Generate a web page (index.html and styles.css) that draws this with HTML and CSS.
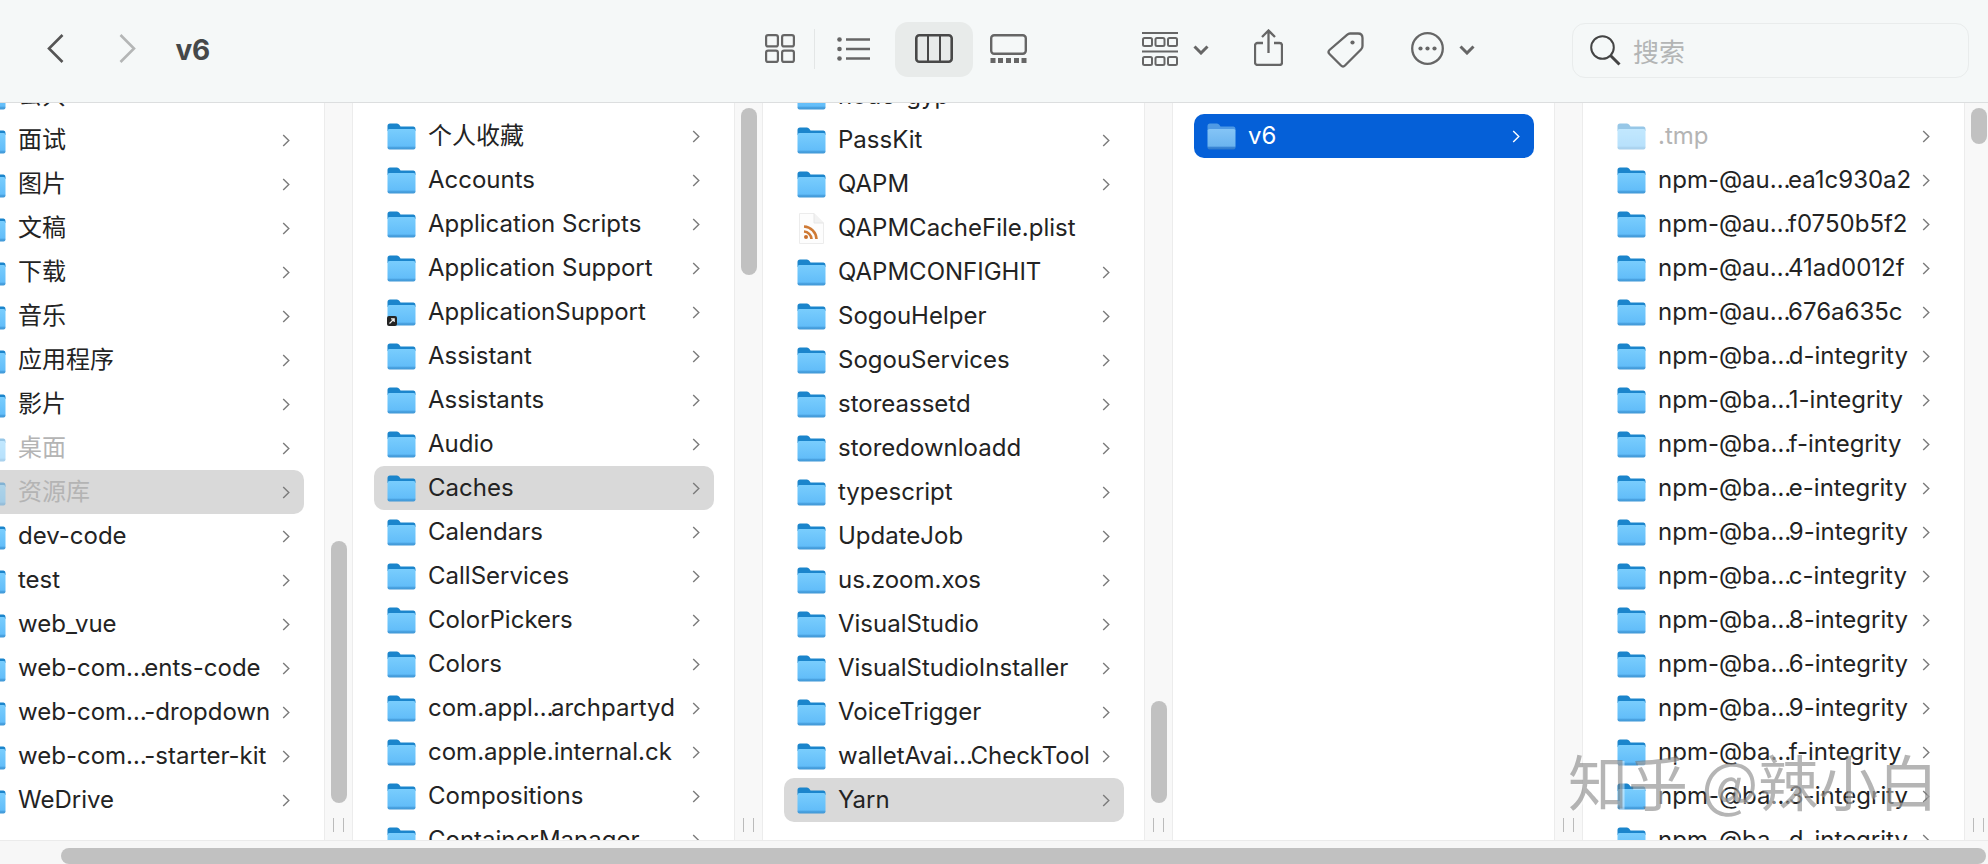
FILE: index.html
```html
<!DOCTYPE html>
<html lang="zh">
<head>
<meta charset="utf-8">
<title>v6</title>
<link rel="stylesheet" href="styles.css">
</head>
<body>
<svg class="defs" width="0" height="0" aria-hidden="true">
  <defs>
    <linearGradient id="fb" x1="0" y1="0" x2="0" y2="1"><stop offset="0" stop-color="#79cdfd"/><stop offset=".85" stop-color="#62bdf9"/><stop offset=".86" stop-color="#4ea6e4"/><stop offset="1" stop-color="#3f97d6"/></linearGradient>
    <linearGradient id="fs" x1="0" y1="0" x2="0" y2="1"><stop offset="0" stop-color="#84c4f6"/><stop offset=".85" stop-color="#6bb4ef"/><stop offset=".86" stop-color="#3f8ad8"/><stop offset="1" stop-color="#2c78cc"/></linearGradient>
    <symbol id="folder" viewBox="0 0 29 27">
      <path d="M0.5 8V3Q0.5 0.5 3 0.5H10Q11.5 0.5 12.5 2L13.5 3.5H26.5Q28.5 3.5 28.5 6V8Z" fill="#1b85cc"/>
      <rect x="0.5" y="6" width="28" height="20.5" rx="2" fill="url(#fb)"/>
    </symbol>
    <symbol id="folder-sel" viewBox="0 0 29 27">
      <path d="M0.5 8V3Q0.5 0.5 3 0.5H10Q11.5 0.5 12.5 2L13.5 3.5H26.5Q28.5 3.5 28.5 6V8Z" fill="#4f9ae4"/>
      <rect x="0.5" y="6" width="28" height="20.5" rx="2" fill="url(#fs)"/>
    </symbol>
    <symbol id="folder-alias" viewBox="0 0 29 27">
      <use href="#folder" width="29" height="27"/>
      <rect x="0" y="17" width="10" height="10" rx="2" fill="#242424"/>
      <path d="M2.5 24.5L7 20M4 19.8H7.2V23" fill="none" stroke="#eee" stroke-width="1.2"/>
    </symbol>
    <symbol id="chev" viewBox="0 0 8 13">
      <path d="M1.2 1L6.8 6.5L1.2 12" fill="none" stroke="currentColor" stroke-width="1.4"/>
    </symbol>
    <symbol id="plist" viewBox="0 0 29 31">
      <path d="M2.5 0.5H17L26.5 10V30.5H2.5Z" fill="#fdfdfd" stroke="#ececec"/>
      <path d="M17 0.5V10H26.5" fill="#f2f2f2" stroke="#e6e6e6"/>
      <circle cx="9" cy="24" r="2" fill="#c96f2c"/>
      <path d="M7 18.5A8 8 0 0 1 14.5 26M7 13.5A13 13 0 0 1 19.5 26" fill="none" stroke="#cf7a35" stroke-width="2.6"/>
    </symbol>
  </defs>
</svg>

<header class="toolbar">
  <div class="nav">
    <svg class="ic-back" width="17" height="29" viewBox="0 0 17 29"><path d="M15.5 1L2 14.5L15.5 28" fill="none" stroke="#555" stroke-width="2.6"/></svg>
    <svg class="ic-forward" width="17" height="29" viewBox="0 0 17 29"><path d="M1.5 1L15 14.5L1.5 28" fill="none" stroke="#b4b6b6" stroke-width="2.6"/></svg>
    <span class="title">v6</span>
  </div>
  <div class="views">
    <svg width="30" height="29" viewBox="0 0 30 29"><g fill="none" stroke="#666" stroke-width="2.2"><rect x="1.1" y="1.1" width="11.8" height="11.3" rx="2"/><rect x="17.1" y="1.1" width="11.8" height="11.3" rx="2"/><rect x="1.1" y="16.6" width="11.8" height="11.3" rx="2"/><rect x="17.1" y="16.6" width="11.8" height="11.3" rx="2"/></g></svg>
    <span class="view-sep"></span>
    <svg class="ic-list" width="33" height="24" viewBox="0 0 33 24"><g fill="#666"><circle cx="2.5" cy="2.5" r="2.3"/><circle cx="2.5" cy="12" r="2.3"/><circle cx="2.5" cy="21.5" r="2.3"/></g><path d="M9 2.5H33M9 12H33M9 21.5H33" stroke="#666" stroke-width="2.4"/></svg>
    <span class="view-on">
      <svg class="ic-columns" width="38" height="29" viewBox="0 0 38 29"><rect x="1.3" y="1.3" width="35.4" height="26.4" rx="3" fill="none" stroke="#484848" stroke-width="2.6"/><path d="M13 1V28M25 1V28" stroke="#484848" stroke-width="2"/></svg>
    </span>
    <svg class="ic-gallery" width="37" height="29" viewBox="0 0 37 29"><rect x="1.2" y="1.2" width="34.6" height="18.6" rx="3" fill="none" stroke="#666" stroke-width="2.4"/><g fill="#666"><rect x="0.5" y="24" width="5" height="5"/><rect x="8" y="24" width="5" height="5"/><rect x="16" y="24" width="5" height="5"/><rect x="24" y="24" width="5" height="5"/><rect x="31.5" y="24" width="5" height="5"/></g></svg>
  </div>
  <div class="actions">
    <svg width="36" height="34" viewBox="0 0 36 34"><path d="M0 1H36M0 19.5H36" stroke="#666" stroke-width="2"/><g fill="none" stroke="#666" stroke-width="2"><rect x="1" y="6" width="9" height="8" rx="1.5"/><rect x="13.5" y="6" width="9" height="8" rx="1.5"/><rect x="26" y="6" width="9" height="8" rx="1.5"/><rect x="1" y="25" width="9" height="8" rx="1.5"/><rect x="13.5" y="25" width="9" height="8" rx="1.5"/><rect x="26" y="25" width="9" height="8" rx="1.5"/></g></svg>
    <svg class="ic-caret" width="16" height="10" viewBox="0 0 16 10"><path d="M1.5 1.5L8 8L14.5 1.5" fill="none" stroke="#666" stroke-width="3"/></svg>
    <svg class="ic-share" width="29" height="37" viewBox="0 0 29 37"><path d="M9 14H3.5A2.5 2.5 0 0 0 1 16.5V33.5A2.5 2.5 0 0 0 3.5 36H25.5A2.5 2.5 0 0 0 28 33.5V16.5A2.5 2.5 0 0 0 25.5 14H20M14.5 24V1.5M8 8L14.5 1.5L21 8" fill="none" stroke="#666" stroke-width="2.3"/></svg>
    <svg class="ic-tag" width="37" height="36" viewBox="0 0 37 36"><path d="M23 1.5H31Q35.5 1.5 35.5 6V14Q35.5 16 34 17.5L18 33.5Q16 35.5 14 33.5L2.5 22Q.5 20 2.5 18L20 2.8Q21.5 1.5 23 1.5Z" fill="none" stroke="#666" stroke-width="2.3"/><circle cx="25.5" cy="10.5" r="2.1" fill="#666"/></svg>
    <svg class="ic-more" width="33" height="33" viewBox="0 0 33 33"><circle cx="16.5" cy="16.5" r="15.3" fill="none" stroke="#666" stroke-width="2.3"/><g fill="#666"><circle cx="9.5" cy="16.5" r="2.1"/><circle cx="16.5" cy="16.5" r="2.1"/><circle cx="23.5" cy="16.5" r="2.1"/></g></svg>
    <svg class="ic-caret" width="16" height="10" viewBox="0 0 16 10"><path d="M1.5 1.5L8 8L14.5 1.5" fill="none" stroke="#666" stroke-width="3"/></svg>
  </div>
  <div class="search">
    <svg width="31" height="31" viewBox="0 0 31 31"><circle cx="12.5" cy="12.5" r="11.3" fill="none" stroke="#444" stroke-width="2"/><path d="M20.5 20.5L29.5 29.5" stroke="#444" stroke-width="3"/></svg>
    <span class="search-label">搜索</span>
  </div>
</header>

<main class="browser">
  <div class="panes">
    <section class="col col-first">
      <ul class="list list-scrolled">
        <li class="row"><svg class="fi"><use href="#folder"/></svg><span class="name cjk">公共</span><svg class="ch"><use href="#chev"/></svg></li>
        <li class="row"><svg class="fi"><use href="#folder"/></svg><span class="name cjk">面试</span><svg class="ch"><use href="#chev"/></svg></li>
        <li class="row"><svg class="fi"><use href="#folder"/></svg><span class="name cjk">图片</span><svg class="ch"><use href="#chev"/></svg></li>
        <li class="row"><svg class="fi"><use href="#folder"/></svg><span class="name cjk">文稿</span><svg class="ch"><use href="#chev"/></svg></li>
        <li class="row"><svg class="fi"><use href="#folder"/></svg><span class="name cjk">下载</span><svg class="ch"><use href="#chev"/></svg></li>
        <li class="row"><svg class="fi"><use href="#folder"/></svg><span class="name cjk">音乐</span><svg class="ch"><use href="#chev"/></svg></li>
        <li class="row"><svg class="fi"><use href="#folder"/></svg><span class="name cjk">应用程序</span><svg class="ch"><use href="#chev"/></svg></li>
        <li class="row"><svg class="fi"><use href="#folder"/></svg><span class="name cjk">影片</span><svg class="ch"><use href="#chev"/></svg></li>
        <li class="row dim"><svg class="fi"><use href="#folder"/></svg><span class="name cjk">桌面</span><svg class="ch"><use href="#chev"/></svg></li>
        <li class="row dim path"><svg class="fi"><use href="#folder"/></svg><span class="name cjk">资源库</span><svg class="ch"><use href="#chev"/></svg></li>
        <li class="row"><svg class="fi"><use href="#folder"/></svg><span class="name">dev-code</span><svg class="ch"><use href="#chev"/></svg></li>
        <li class="row"><svg class="fi"><use href="#folder"/></svg><span class="name">test</span><svg class="ch"><use href="#chev"/></svg></li>
        <li class="row"><svg class="fi"><use href="#folder"/></svg><span class="name">web_vue</span><svg class="ch"><use href="#chev"/></svg></li>
        <li class="row"><svg class="fi"><use href="#folder"/></svg><span class="name">web-com<span class="el">…</span>ents-code</span><svg class="ch"><use href="#chev"/></svg></li>
        <li class="row"><svg class="fi"><use href="#folder"/></svg><span class="name">web-com<span class="el">…</span>-dropdown</span><svg class="ch"><use href="#chev"/></svg></li>
        <li class="row"><svg class="fi"><use href="#folder"/></svg><span class="name">web-com<span class="el">…</span>-starter-kit</span><svg class="ch"><use href="#chev"/></svg></li>
        <li class="row"><svg class="fi"><use href="#folder"/></svg><span class="name">WeDrive</span><svg class="ch"><use href="#chev"/></svg></li>
      </ul>
    </section>
    <div class="gutter"><span class="thumb thumb-1"></span><span class="grip"></span></div>

    <section class="col">
      <ul class="list">
        <li class="row"><svg class="fi"><use href="#folder"/></svg><span class="name cjk">个人收藏</span><svg class="ch"><use href="#chev"/></svg></li>
        <li class="row"><svg class="fi"><use href="#folder"/></svg><span class="name">Accounts</span><svg class="ch"><use href="#chev"/></svg></li>
        <li class="row"><svg class="fi"><use href="#folder"/></svg><span class="name">Application Scripts</span><svg class="ch"><use href="#chev"/></svg></li>
        <li class="row"><svg class="fi"><use href="#folder"/></svg><span class="name">Application Support</span><svg class="ch"><use href="#chev"/></svg></li>
        <li class="row"><svg class="fi"><use href="#folder-alias"/></svg><span class="name">ApplicationSupport</span><svg class="ch"><use href="#chev"/></svg></li>
        <li class="row"><svg class="fi"><use href="#folder"/></svg><span class="name">Assistant</span><svg class="ch"><use href="#chev"/></svg></li>
        <li class="row"><svg class="fi"><use href="#folder"/></svg><span class="name">Assistants</span><svg class="ch"><use href="#chev"/></svg></li>
        <li class="row"><svg class="fi"><use href="#folder"/></svg><span class="name">Audio</span><svg class="ch"><use href="#chev"/></svg></li>
        <li class="row path"><svg class="fi"><use href="#folder"/></svg><span class="name">Caches</span><svg class="ch"><use href="#chev"/></svg></li>
        <li class="row"><svg class="fi"><use href="#folder"/></svg><span class="name">Calendars</span><svg class="ch"><use href="#chev"/></svg></li>
        <li class="row"><svg class="fi"><use href="#folder"/></svg><span class="name">CallServices</span><svg class="ch"><use href="#chev"/></svg></li>
        <li class="row"><svg class="fi"><use href="#folder"/></svg><span class="name">ColorPickers</span><svg class="ch"><use href="#chev"/></svg></li>
        <li class="row"><svg class="fi"><use href="#folder"/></svg><span class="name">Colors</span><svg class="ch"><use href="#chev"/></svg></li>
        <li class="row"><svg class="fi"><use href="#folder"/></svg><span class="name">com.appl<span class="el">…</span>archpartyd</span><svg class="ch"><use href="#chev"/></svg></li>
        <li class="row"><svg class="fi"><use href="#folder"/></svg><span class="name">com.apple.internal.ck</span><svg class="ch"><use href="#chev"/></svg></li>
        <li class="row"><svg class="fi"><use href="#folder"/></svg><span class="name">Compositions</span><svg class="ch"><use href="#chev"/></svg></li>
        <li class="row"><svg class="fi"><use href="#folder"/></svg><span class="name">ContainerManager</span><svg class="ch"><use href="#chev"/></svg></li>
      </ul>
    </section>
    <div class="gutter"><span class="thumb thumb-2"></span><span class="grip"></span></div>

    <section class="col">
      <ul class="list list-scrolled">
        <li class="row"><svg class="fi"><use href="#folder"/></svg><span class="name">node-gyp</span><svg class="ch"><use href="#chev"/></svg></li>
        <li class="row"><svg class="fi"><use href="#folder"/></svg><span class="name">PassKit</span><svg class="ch"><use href="#chev"/></svg></li>
        <li class="row"><svg class="fi"><use href="#folder"/></svg><span class="name">QAPM</span><svg class="ch"><use href="#chev"/></svg></li>
        <li class="row"><svg class="fi fi-doc"><use href="#plist"/></svg><span class="name">QAPMCacheFile.plist</span></li>
        <li class="row"><svg class="fi"><use href="#folder"/></svg><span class="name">QAPMCONFIGHIT</span><svg class="ch"><use href="#chev"/></svg></li>
        <li class="row"><svg class="fi"><use href="#folder"/></svg><span class="name">SogouHelper</span><svg class="ch"><use href="#chev"/></svg></li>
        <li class="row"><svg class="fi"><use href="#folder"/></svg><span class="name">SogouServices</span><svg class="ch"><use href="#chev"/></svg></li>
        <li class="row"><svg class="fi"><use href="#folder"/></svg><span class="name">storeassetd</span><svg class="ch"><use href="#chev"/></svg></li>
        <li class="row"><svg class="fi"><use href="#folder"/></svg><span class="name">storedownloadd</span><svg class="ch"><use href="#chev"/></svg></li>
        <li class="row"><svg class="fi"><use href="#folder"/></svg><span class="name">typescript</span><svg class="ch"><use href="#chev"/></svg></li>
        <li class="row"><svg class="fi"><use href="#folder"/></svg><span class="name">UpdateJob</span><svg class="ch"><use href="#chev"/></svg></li>
        <li class="row"><svg class="fi"><use href="#folder"/></svg><span class="name">us.zoom.xos</span><svg class="ch"><use href="#chev"/></svg></li>
        <li class="row"><svg class="fi"><use href="#folder"/></svg><span class="name">VisualStudio</span><svg class="ch"><use href="#chev"/></svg></li>
        <li class="row"><svg class="fi"><use href="#folder"/></svg><span class="name">VisualStudioInstaller</span><svg class="ch"><use href="#chev"/></svg></li>
        <li class="row"><svg class="fi"><use href="#folder"/></svg><span class="name">VoiceTrigger</span><svg class="ch"><use href="#chev"/></svg></li>
        <li class="row"><svg class="fi"><use href="#folder"/></svg><span class="name">walletAvai<span class="el">…</span>CheckTool</span><svg class="ch"><use href="#chev"/></svg></li>
        <li class="row path"><svg class="fi"><use href="#folder"/></svg><span class="name">Yarn</span><svg class="ch"><use href="#chev"/></svg></li>
      </ul>
    </section>
    <div class="gutter"><span class="thumb thumb-3"></span><span class="grip"></span></div>

    <section class="col">
      <ul class="list">
        <li class="row active"><svg class="fi"><use href="#folder-sel"/></svg><span class="name">v6</span><svg class="ch"><use href="#chev"/></svg></li>
      </ul>
    </section>
    <div class="gutter"><span class="grip"></span></div>

    <section class="col">
      <ul class="list">
        <li class="row dim"><svg class="fi"><use href="#folder"/></svg><span class="name">.tmp</span><svg class="ch"><use href="#chev"/></svg></li>
        <li class="row"><svg class="fi"><use href="#folder"/></svg><span class="name">npm-@au<span class="el">…</span>ea1c930a2</span><svg class="ch"><use href="#chev"/></svg></li>
        <li class="row"><svg class="fi"><use href="#folder"/></svg><span class="name">npm-@au<span class="el">…</span>f0750b5f2</span><svg class="ch"><use href="#chev"/></svg></li>
        <li class="row"><svg class="fi"><use href="#folder"/></svg><span class="name">npm-@au<span class="el">…</span>41ad0012f</span><svg class="ch"><use href="#chev"/></svg></li>
        <li class="row"><svg class="fi"><use href="#folder"/></svg><span class="name">npm-@au<span class="el">…</span>676a635c</span><svg class="ch"><use href="#chev"/></svg></li>
        <li class="row"><svg class="fi"><use href="#folder"/></svg><span class="name">npm-@ba<span class="el">…</span>d-integrity</span><svg class="ch"><use href="#chev"/></svg></li>
        <li class="row"><svg class="fi"><use href="#folder"/></svg><span class="name">npm-@ba<span class="el">…</span>1-integrity</span><svg class="ch"><use href="#chev"/></svg></li>
        <li class="row"><svg class="fi"><use href="#folder"/></svg><span class="name">npm-@ba<span class="el">…</span>f-integrity</span><svg class="ch"><use href="#chev"/></svg></li>
        <li class="row"><svg class="fi"><use href="#folder"/></svg><span class="name">npm-@ba<span class="el">…</span>e-integrity</span><svg class="ch"><use href="#chev"/></svg></li>
        <li class="row"><svg class="fi"><use href="#folder"/></svg><span class="name">npm-@ba<span class="el">…</span>9-integrity</span><svg class="ch"><use href="#chev"/></svg></li>
        <li class="row"><svg class="fi"><use href="#folder"/></svg><span class="name">npm-@ba<span class="el">…</span>c-integrity</span><svg class="ch"><use href="#chev"/></svg></li>
        <li class="row"><svg class="fi"><use href="#folder"/></svg><span class="name">npm-@ba<span class="el">…</span>8-integrity</span><svg class="ch"><use href="#chev"/></svg></li>
        <li class="row"><svg class="fi"><use href="#folder"/></svg><span class="name">npm-@ba<span class="el">…</span>6-integrity</span><svg class="ch"><use href="#chev"/></svg></li>
        <li class="row"><svg class="fi"><use href="#folder"/></svg><span class="name">npm-@ba<span class="el">…</span>9-integrity</span><svg class="ch"><use href="#chev"/></svg></li>
        <li class="row"><svg class="fi"><use href="#folder"/></svg><span class="name">npm-@ba<span class="el">…</span>f-integrity</span><svg class="ch"><use href="#chev"/></svg></li>
        <li class="row"><svg class="fi"><use href="#folder"/></svg><span class="name">npm-@ba<span class="el">…</span>3-integrity</span><svg class="ch"><use href="#chev"/></svg></li>
        <li class="row"><svg class="fi"><use href="#folder"/></svg><span class="name">npm-@ba<span class="el">…</span>d-integrity</span><svg class="ch"><use href="#chev"/></svg></li>
      </ul>
    </section>
    <div class="gutter"><span class="thumb thumb-5"></span><span class="grip"></span></div>
  </div>
  <div class="hbar"><span class="hthumb"></span></div>
</main>
<div class="watermark">知乎 @辣小白</div>
</body>
</html>
```

FILE: styles.css
```css
* { box-sizing: border-box; }
html, body { margin: 0; height: 100%; }
body {
  width: 1988px;
  height: 864px;
  overflow: hidden;
  background: #fff;
  color: #232323;
  font-family: Inter, "Noto Sans CJK SC", sans-serif;
  display: flex;
  flex-direction: column;
}
.defs { position: absolute; }

/* toolbar */
.toolbar {
  flex: 0 0 103px;
  display: flex;
  align-items: center;
  padding-bottom: 5px;
  background: #f5f8f8;
  border-bottom: 1px solid #dcdedf;
}
.nav { flex: 0 0 765px; display: flex; align-items: center; padding-left: 47px; }
.ic-forward { margin-left: 55px; }
.title { margin: 2px 0 0 39.5px; font-size: 28px; font-weight: 700; color: #464849; letter-spacing: -.3px; }
.views { flex: 0 0 262px; display: flex; align-items: center; }
.view-sep { width: 1px; height: 40px; margin: 0 22px 0 19px; background: #e3e6e6; }
.ic-list { margin-right: 25px; }
.view-on {
  width: 78px; height: 55px; margin: 2px 17px 0 0;
  display: flex; align-items: center; justify-content: center;
  background: #e8ebea; border-radius: 13px;
}
.ic-columns { margin-top: -2px; }
.ic-gallery { flex: none; }
.actions { flex: 0 0 430px; margin-left: 115px; display: flex; align-items: center; }
.ic-caret { margin: 2px 0 0 15px; }
.ic-share { margin: -2px 0 0 45px; }
.ic-tag { margin: 2px 0 0 44px; }
.ic-more { margin-left: 47px; }
.search {
  width: 397px; height: 55px; margin-top: 3px;
  display: flex; align-items: center; padding-left: 17px;
  border: 1px solid #e9ecec; border-radius: 13px;
}
.search-label { margin-left: 12px; font-size: 26px; color: #b3b5b5; }

/* browser */
.browser { flex: 1; min-height: 0; display: flex; flex-direction: column; overflow: hidden; }
.panes { flex: 1; min-height: 0; display: flex; margin-left: -57px; }
.col { flex: 0 0 381px; overflow: hidden; background: #fff; }
.gutter {
  flex: 0 0 29px;
  display: flex; flex-direction: column; align-items: center;
  padding-bottom: 8px;
  background: #f8f8f8;
  border-left: 1px solid #ececec;
  border-right: 1px solid #ececec;
}
.thumb { display: block; width: 16px; border-radius: 8px; background: #c1c1c1; }
.thumb-1 { margin-top: 438px; height: 262px; }
.thumb-2 { margin-top: 5px; height: 167px; }
.thumb-3 { margin-top: 598px; height: 102px; }
.thumb-5 { margin-top: 5px; height: 36px; }
.grip {
  display: block; margin-top: auto; width: 11px; height: 14px;
  border-left: 1.5px solid #bbb; border-right: 1.5px solid #bbb;
}
.hbar { flex: 0 0 24px; padding: 7px 2px 0 61px; background: #f7f7f7; border-top: 1px solid #ebebeb; }
.hthumb { display: block; height: 16px; border-radius: 8px; background: #c1c1c1; }

/* rows */
.list { list-style: none; margin: 0; padding: 11px 0 0; }
.list-scrolled { padding: 0; margin-top: -29px; }
.row {
  height: 44px;
  margin: 0 20px 0 21px;
  padding: 0 14px 0 13px;
  display: flex; align-items: center;
  border-radius: 10px;
  font-size: 24px;
  white-space: nowrap;
}
.fi { flex: none; width: 29px; height: 27px; margin-right: 12px; }
.fi-doc { height: 31px; }
.name { flex: 1; min-width: 0; padding-bottom: 2px; }
.cjk { padding-bottom: 5px; }
.el { letter-spacing: -2.5px; }
.ch { flex: none; width: 8px; height: 13px; color: #7b7b7b; }
.path { background: #d9d9d9; }
.dim .name { color: #b4b4b4; }
.dim .fi { opacity: .45; }
.active { background: #0560d8; color: #fff; }
.active .ch { color: #fff; }

/* watermark */
.watermark {
  position: absolute;
  left: 1568px;
  top: 740px;
  font-family: "Noto Sans CJK SC", sans-serif;
  font-size: 60px;
  font-weight: 400;
  line-height: 80px;
  color: rgba(120, 120, 120, .55);
  text-shadow: 2px 1px 0 rgba(255, 255, 255, .45);
  white-space: nowrap;
}
```
